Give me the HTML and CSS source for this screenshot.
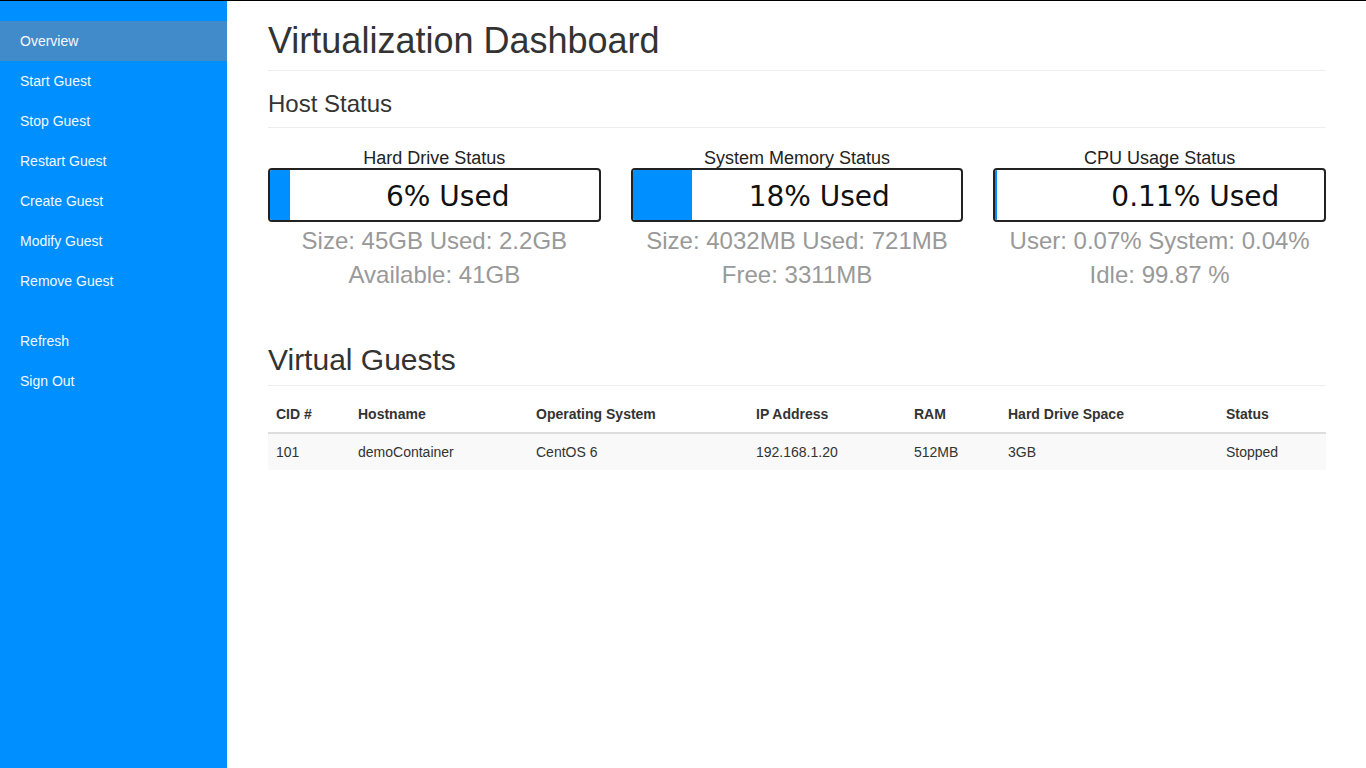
FILE: index.html
```html
<!DOCTYPE html>
<html lang="en">
<head>
<meta charset="utf-8">
<title>Virtualization Dashboard</title>
<link rel="stylesheet" href="styles.css">
</head>
<body>
<div class="layout">
  <nav class="sidebar">
    <ul class="nav-group">
      <li class="nav-item active">Overview</li>
      <li class="nav-item">Start Guest</li>
      <li class="nav-item">Stop Guest</li>
      <li class="nav-item">Restart Guest</li>
      <li class="nav-item">Create Guest</li>
      <li class="nav-item">Modify Guest</li>
      <li class="nav-item">Remove Guest</li>
    </ul>
    <ul class="nav-group">
      <li class="nav-item">Refresh</li>
      <li class="nav-item">Sign Out</li>
    </ul>
  </nav>
  <main class="main">
    <h1 class="page-title">Virtualization Dashboard</h1>
    <h3 class="sub-header">Host Status</h3>
    <div class="status-grid">
      <div class="status">
        <div class="status-label">Hard Drive Status</div>
        <div class="bar">
          <div class="bar-fill" style="width:6%"></div>
          <div class="bar-text">6% Used</div>
        </div>
        <div class="status-detail">Size: 45GB Used: 2.2GB<br>Available: 41GB</div>
      </div>
      <div class="status">
        <div class="status-label">System Memory Status</div>
        <div class="bar">
          <div class="bar-fill" style="width:18%"></div>
          <div class="bar-text">18% Used</div>
        </div>
        <div class="status-detail">Size: 4032MB Used: 721MB<br>Free: 3311MB</div>
      </div>
      <div class="status">
        <div class="status-label">CPU Usage Status</div>
        <div class="bar">
          <div class="bar-fill" style="width:0.4%"></div>
          <div class="bar-text">0.11% Used</div>
        </div>
        <div class="status-detail">User: 0.07% System: 0.04%<br>Idle: 99.87 %</div>
      </div>
    </div>
    <h2 class="section-title">Virtual Guests</h2>
    <table class="guests">
      <thead>
        <tr>
          <th class="c-cid">CID #</th>
          <th class="c-host">Hostname</th>
          <th class="c-os">Operating System</th>
          <th class="c-ip">IP Address</th>
          <th class="c-ram">RAM</th>
          <th class="c-hdd">Hard Drive Space</th>
          <th class="c-status">Status</th>
        </tr>
      </thead>
      <tbody>
        <tr>
          <td>101</td>
          <td>demoContainer</td>
          <td>CentOS 6</td>
          <td>192.168.1.20</td>
          <td>512MB</td>
          <td>3GB</td>
          <td>Stopped</td>
        </tr>
      </tbody>
    </table>
  </main>
</div>
</body>
</html>
```

FILE: styles.css
```css
* { box-sizing: border-box; }

html, body {
  margin: 0;
  padding: 0;
  height: 100%;
}

body {
  font-family: "Liberation Sans", Arial, sans-serif;
  font-size: 14px;
  line-height: 1.42857;
  color: #333;
  background: #fff;
  border-top: 1px solid #000;
}

.layout {
  display: flex;
  min-height: 767px;
}

.sidebar {
  width: 227px;
  flex: 0 0 227px;
  background: #008fff;
  padding-top: 20px;
}

.nav-group {
  list-style: none;
  margin: 0 0 20px;
  padding: 0;
}

.nav-item {
  height: 40px;
  line-height: 40px;
  padding-left: 20px;
  color: #f4f8ff;
  font-size: 14px;
}

.nav-item.active {
  background: #428bca;
}

.main {
  flex: 1;
  padding: 0 40px 0 41px;
}

.page-title {
  font-size: 36px;
  font-weight: 500;
  line-height: 1.1;
  margin: 20px 0 20px;
  padding-bottom: 9px;
  border-bottom: 1px solid #eee;
  color: #333;
}

.sub-header {
  font-size: 24px;
  font-weight: 500;
  line-height: 1.1;
  margin: 0 0 20px;
  padding-bottom: 10px;
  border-bottom: 1px solid #eee;
  color: #333;
}

.status-grid {
  display: grid;
  grid-template-columns: repeat(3, 1fr);
  gap: 30px;
}

.status {
  text-align: center;
}

.status-label {
  font-size: 18px;
  line-height: 20px;
  color: #222;
}

.bar {
  position: relative;
  height: 54px;
  border: 2px solid #222;
  border-radius: 4px;
  overflow: hidden;
  display: flex;
  align-items: center;
  text-align: left;
}

.bar-fill {
  position: absolute;
  left: 0;
  top: 0;
  bottom: 0;
  background: #008fff;
}

.bar-text {
  position: relative;
  padding: 5px 0 0 116px;
  font-family: "DejaVu Sans", Verdana, sans-serif;
  font-size: 28px;
  color: #111;
  line-height: 1;
}

.status-detail {
  padding-top: 2px;
  font-size: 24px;
  line-height: 34px;
  color: #999;
}

.section-title {
  font-size: 30px;
  font-weight: 500;
  line-height: 1.1;
  margin: 51px 0 10px;
  padding-bottom: 9px;
  border-bottom: 1px solid #eee;
  color: #333;
}

.guests {
  width: 100%;
  border-collapse: collapse;
  border-spacing: 0;
  table-layout: fixed;
}

.guests th,
.guests td {
  padding: 8px;
  line-height: 20px;
  text-align: left;
  font-size: 14px;
}

.guests th {
  font-weight: bold;
  border-bottom: 2px solid #ddd;
}

.guests tbody tr {
  background: #f9f9f9;
}

.c-cid { width: 82px; }
.c-host { width: 178px; }
.c-os { width: 220px; }
.c-ip { width: 158px; }
.c-ram { width: 94px; }
.c-hdd { width: 218px; }
.c-status { width: 108px; }
```
